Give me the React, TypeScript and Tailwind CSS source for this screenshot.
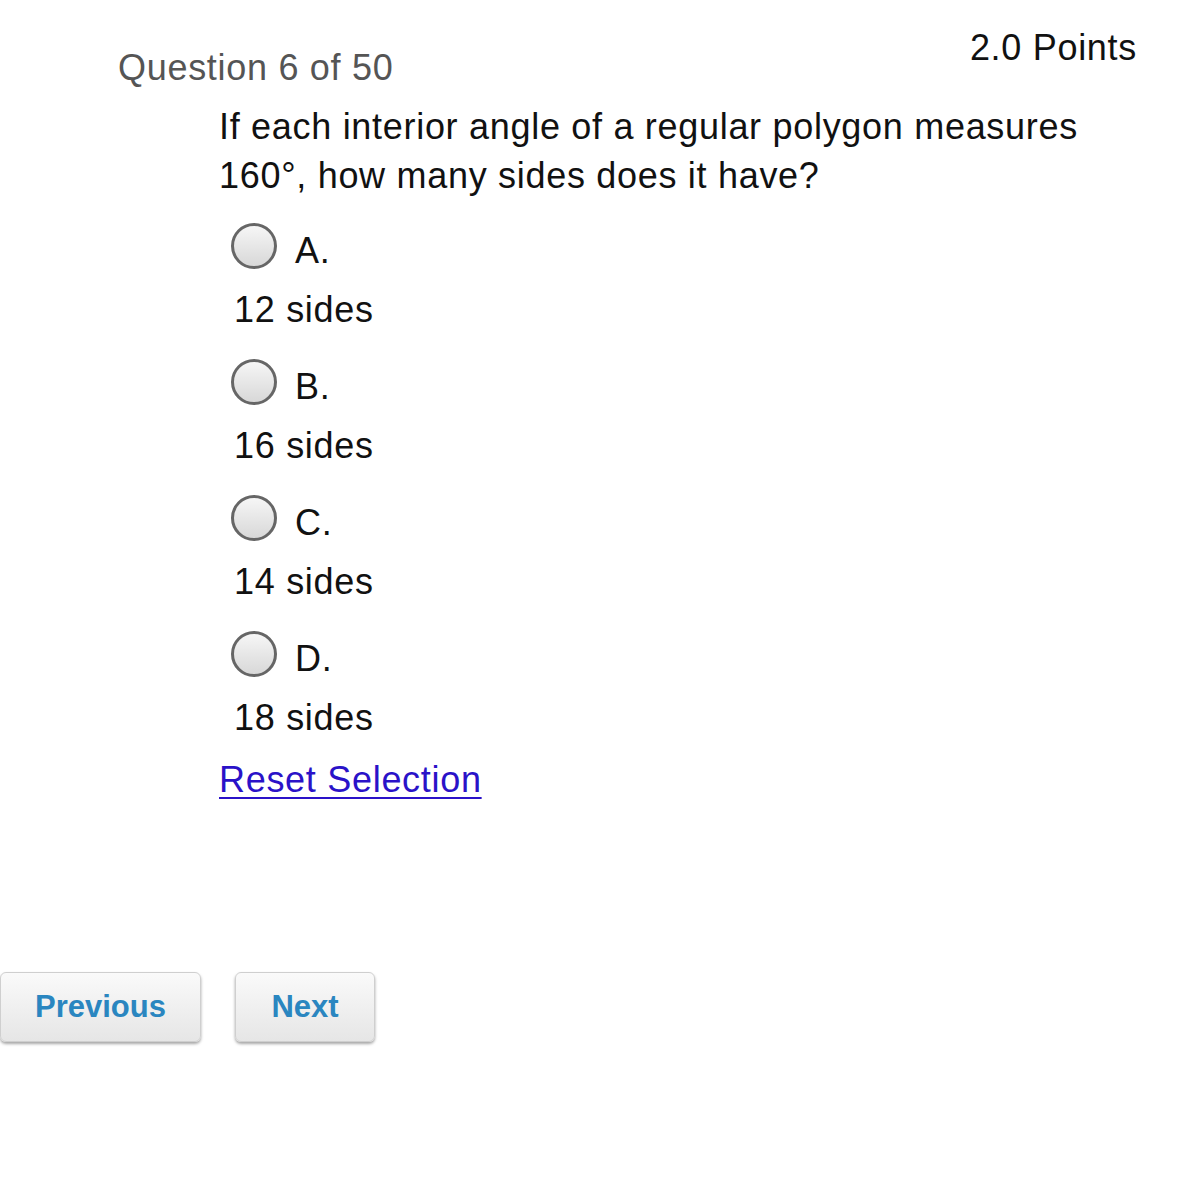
import React from "react";

const options = [
  { label: "A.", text: "12 sides" },
  { label: "B.", text: "16 sides" },
  { label: "C.", text: "14 sides" },
  { label: "D.", text: "18 sides" },
];

function Radio() {
  return (
    <div className="w-[46px] h-[46px] rounded-full border-[3px] border-[#666] bg-gradient-to-b from-[#f6f6f6] to-[#d8d8d8] shrink-0" />
  );
}

export default function App() {
  return (
    <div
      className="w-[1198px] h-[1200px] bg-white text-black relative tracking-[0.7px]"
      style={{ fontFamily: '"Liberation Sans", Arial, Helvetica, sans-serif' }}
    >
      <div className="flex justify-between pl-[118px] pr-[61px]">
        <div className="text-[36px] leading-[40px] text-[#555] pt-[48px]">Question 6 of 50</div>
        <div className="text-[36px] leading-[40px] text-[#111] pt-[28px]">2.0 Points</div>
      </div>
      <div className="pl-[219px] pr-[80px] pt-[14px]">
        <div className="text-[36px] leading-[49px] text-[#111]">
          If each interior angle of a regular polygon measures
          <br />
          160°, how many sides does it have?
        </div>
        <div className="flex flex-col pt-[18px]">
          {options.map((o) => (
            <div key={o.label} className="h-[136px] flex flex-col">
              <div className="flex items-center gap-[18px] pl-[12px] h-[56px]">
                <Radio />
                <span className="text-[36px] leading-[40px] text-[#111] mt-[10px]">{o.label}</span>
              </div>
              <div className="text-[36px] leading-[60px] pl-[15px] pt-[6px] text-[#111]">{o.text}</div>
            </div>
          ))}
        </div>
        <a
          href="#"
          className="inline-block -mt-[2px] text-[36px] leading-[40px] text-[#2a12c8] underline decoration-[2px] underline-offset-[5px]"
        >
          Reset Selection
        </a>
      </div>
      <div className="flex gap-[34px] mt-[172px]">
        <button className="w-[201px] h-[70px] rounded-[6px] border border-[#cfcfcf] bg-gradient-to-b from-[#fafafa] to-[#e6e6e6] shadow-[0_2px_3px_rgba(0,0,0,0.35)] text-[31px] font-bold text-[#2a86c0] tracking-normal">
          Previous
        </button>
        <button className="w-[140px] h-[70px] rounded-[6px] border border-[#cfcfcf] bg-gradient-to-b from-[#fafafa] to-[#e6e6e6] shadow-[0_2px_3px_rgba(0,0,0,0.35)] text-[31px] font-bold text-[#2a86c0] tracking-normal">
          Next
        </button>
      </div>
    </div>
  );
}
